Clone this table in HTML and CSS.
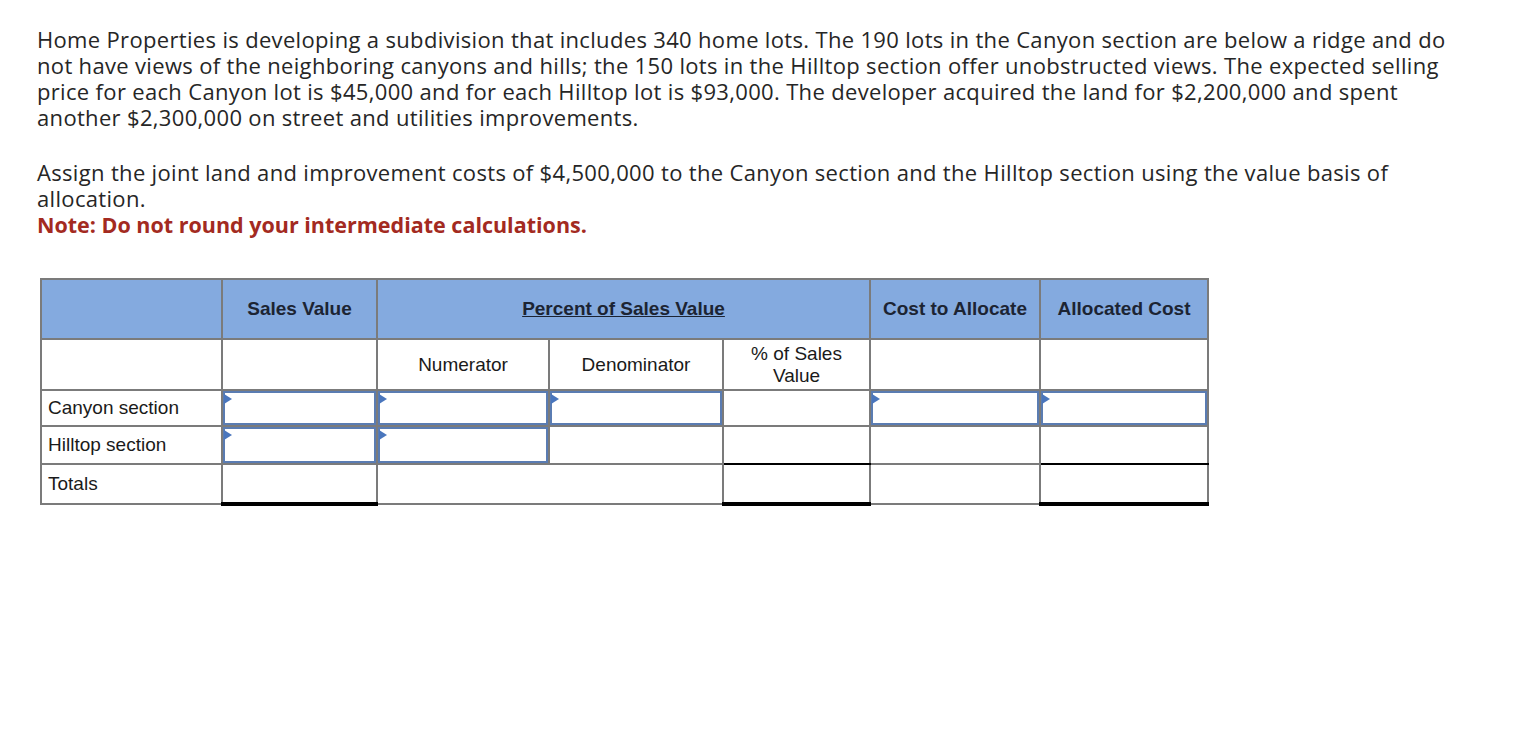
FILE: index.html
```html
<!DOCTYPE html>
<html>
<head>
<meta charset="utf-8">
<link rel="stylesheet" href="styles.css">
</head>
<body>
<div class="page">
  <div class="question">
    <p class="para">Home Properties is developing a subdivision that includes 340 home lots. The 190 lots in the Canyon section are below a ridge and do not have views of the neighboring canyons and hills; the 150 lots in the Hilltop section offer unobstructed views. The expected selling price for each Canyon lot is $45,000 and for each Hilltop lot is $93,000. The developer acquired the land for $2,200,000 and spent another $2,300,000 on street and utilities improvements.</p>
    <p class="para para-2">Assign the joint land and improvement costs of $4,500,000 to the Canyon section and the Hilltop section using the value basis of allocation.</p>
    <p class="note">Note: Do not round your intermediate calculations.</p>
  </div>

  <table class="grid">
    <colgroup>
      <col class="c-label"><col class="c-sales"><col class="c-num"><col class="c-den"><col class="c-pct"><col class="c-cost"><col class="c-alloc">
    </colgroup>
    <tr class="head-row">
      <th></th>
      <th>Sales Value</th>
      <th colspan="3"><span class="u">Percent of Sales Value</span></th>
      <th>Cost to Allocate</th>
      <th>Allocated Cost</th>
    </tr>
    <tr class="sub-row">
      <td></td>
      <td></td>
      <td class="ctr">Numerator</td>
      <td class="ctr">Denominator</td>
      <td class="ctr">% of Sales<br>Value</td>
      <td></td>
      <td></td>
    </tr>
    <tr class="row-canyon">
      <td class="label">Canyon section</td>
      <td class="in"><div class="box"></div></td>
      <td class="in"><div class="box"></div></td>
      <td class="in"><div class="box"></div></td>
      <td></td>
      <td class="in"><div class="box"></div></td>
      <td class="in"><div class="box"></div></td>
    </tr>
    <tr class="row-hill">
      <td class="label">Hilltop section</td>
      <td class="in"><div class="box"></div></td>
      <td class="in"><div class="box"></div></td>
      <td></td>
      <td class="total-top"></td>
      <td></td>
      <td class="total-top"></td>
    </tr>
    <tr class="row-total">
      <td class="label">Totals</td>
      <td class="dbl"></td>
      <td colspan="2"></td>
      <td class="dbl"></td>
      <td></td>
      <td class="dbl"></td>
    </tr>
  </table>
</div>
</body>
</html>
```

FILE: styles.css
```css
html, body {
  margin: 0;
  padding: 0;
  background: #ffffff;
}

.page {
  padding: 26px 0 0 37px;
}

.question {
  width: 1426px;
  font-family: "Open Sans", "Liberation Sans", sans-serif;
  font-size: 22px;
  letter-spacing: 0.33px;
  line-height: 26px;
  color: #262626;
}

.para {
  margin: 0;
}

.para-2 {
  margin-top: 29px;
}

.note {
  margin: 1px 0 0;
  line-height: 25px;
  color: #a32a21;
  font-size: 21.5px;
  font-weight: 700;
  letter-spacing: 0;
}

.grid {
  margin: 41px 0 0 3px;
  border-collapse: collapse;
  font-family: "Liberation Sans", Arial, sans-serif;
  font-size: 19px;
  color: #1a1a1a;
  table-layout: fixed;
  width: 1167px;
}

.c-label { width: 181px; }
.c-sales { width: 155px; }
.c-num { width: 172px; }
.c-den { width: 174px; }
.c-pct { width: 147px; }
.c-cost { width: 170px; }
.c-alloc { width: 168px; }

.grid th,
.grid td {
  border: 2px solid #7b7b7b;
  padding: 0;
}

.head-row th {
  background: #84aadf;
  height: 58px;
  font-weight: 700;
  color: #1c2433;
  text-align: center;
  vertical-align: middle;
}

.u {
  text-decoration: underline;
}

.sub-row td {
  height: 49px;
}

.ctr {
  text-align: center;
  line-height: 22px;
}

.row-canyon td { height: 34px; }
.row-hill td { height: 36px; }
.row-total td { height: 37px; }

.label {
  padding-left: 6px !important;
  text-align: left;
}

.in {
  position: relative;
}

.box {
  position: absolute;
  inset: 0;
  border: 2px solid #5a7cb2;
}

.box::before {
  content: "";
  position: absolute;
  left: -1px;
  top: 1px;
  border-left: 8px solid #4a76bd;
  border-top: 5px solid transparent;
  border-bottom: 5px solid transparent;
}

.total-top {
  border-bottom: 2px solid #000 !important;
}

.dbl {
  border-top: 2px solid #000 !important;
  border-bottom: 4px solid #000 !important;
}
```
